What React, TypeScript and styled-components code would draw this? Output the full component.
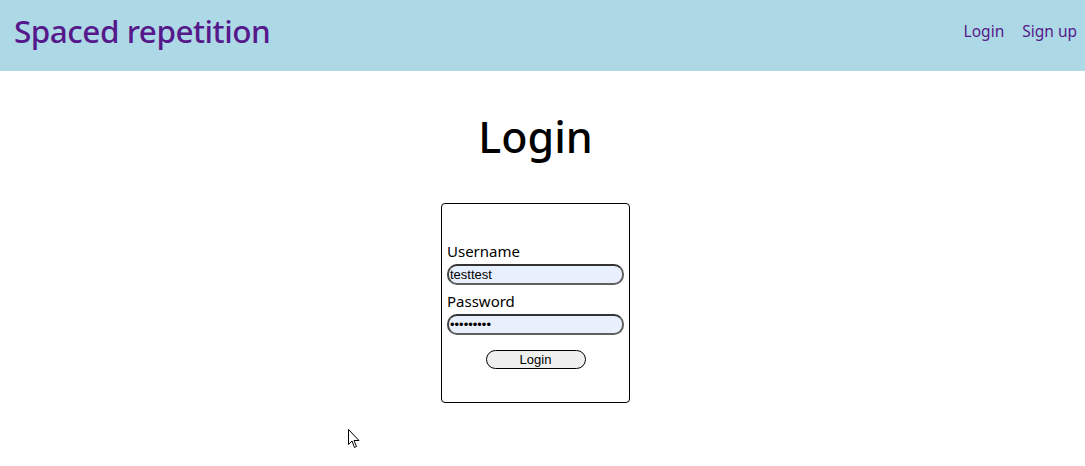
import React from 'react'
import styled, { createGlobalStyle } from 'styled-components'

const GlobalStyle = createGlobalStyle`
  body {
    margin: 0;
    background: #ffffff;
    font-family: 'Noto Sans', 'Open Sans', sans-serif;
  }
`

const Page = styled.div`
  position: relative;
  min-height: 466px;
`

const Header = styled.header`
  height: 71px;
  background: #add8e6;
  display: flex;
  align-items: center;
  justify-content: space-between;
  padding: 0 8px 0 14px;
  box-sizing: border-box;
`

const Brand = styled.div`
  color: #55198b;
  font-size: 31.5px;
  font-weight: 500;
  letter-spacing: -0.5px;
  margin-bottom: 11px;
`

const Nav = styled.nav`
  display: flex;
  gap: 18px;
  margin-bottom: 10px;
`

const NavLink = styled.a`
  color: #55198b;
  font-size: 15.5px;
  text-decoration: none;
`

const Main = styled.main`
  display: flex;
  flex-direction: column;
  align-items: center;
  padding-right: 14px;
`

const Title = styled.h1`
  margin: 40px 0 40px;
  font-size: 43px;
  font-weight: 500;
  line-height: 1.2;
  color: #000000;
`

const FormBox = styled.form`
  width: 189px;
  height: 200px;
  box-sizing: border-box;
  border: 1px solid #000000;
  border-radius: 4px;
  padding: 34px 5px 0;
  display: flex;
  flex-direction: column;
`

const Label = styled.label`
  font-size: 15px;
  line-height: 26px;
  color: #000000;
`

const Input = styled.input`
  width: 100%;
  height: 21px;
  box-sizing: border-box;
  border: 2px solid #5f5f5f;
  border-top-color: #333333;
  border-left-color: #444444;
  border-radius: 10px;
  background: #e8f0fe;
  padding: 0 1px;
  font-family: 'Liberation Sans', Arial, sans-serif;
  font-size: 13px;
  color: #000000;
  margin-bottom: 3px;
  outline: none;
`

const Button = styled.button`
  align-self: center;
  width: 100px;
  height: 19px;
  margin-top: 12px;
  border: 1px solid #000000;
  border-radius: 10px;
  background: #efefef;
  font-family: 'Liberation Sans', Arial, sans-serif;
  font-size: 13px;
  color: #000000;
  padding: 0;
`

const Cursor = styled.svg`
  position: absolute;
  left: 348px;
  top: 429px;
`

export default function App() {
  return (
    <Page>
      <GlobalStyle />
      <Header>
        <Brand>Spaced repetition</Brand>
        <Nav>
          <NavLink href="#">Login</NavLink>
          <NavLink href="#">Sign up</NavLink>
        </Nav>
      </Header>
      <Main>
        <Title>Login</Title>
        <FormBox onSubmit={(e) => e.preventDefault()}>
          <Label htmlFor="username">Username</Label>
          <Input id="username" type="text" defaultValue="testtest" />
          <Label htmlFor="password">Password</Label>
          <Input id="password" type="password" defaultValue="testtest1" />
          <Button type="submit">Login</Button>
        </FormBox>
      </Main>
      <Cursor width="13" height="20" viewBox="0 0 13 20">
        <path d="M0.5 0.5 L0.5 15.5 L4 12 L6.5 18.5 L8.5 17.5 L6 11.5 L11 11.5 Z" fill="#ffffff" stroke="#000000" strokeWidth="1" />
      </Cursor>
    </Page>
  )
}
